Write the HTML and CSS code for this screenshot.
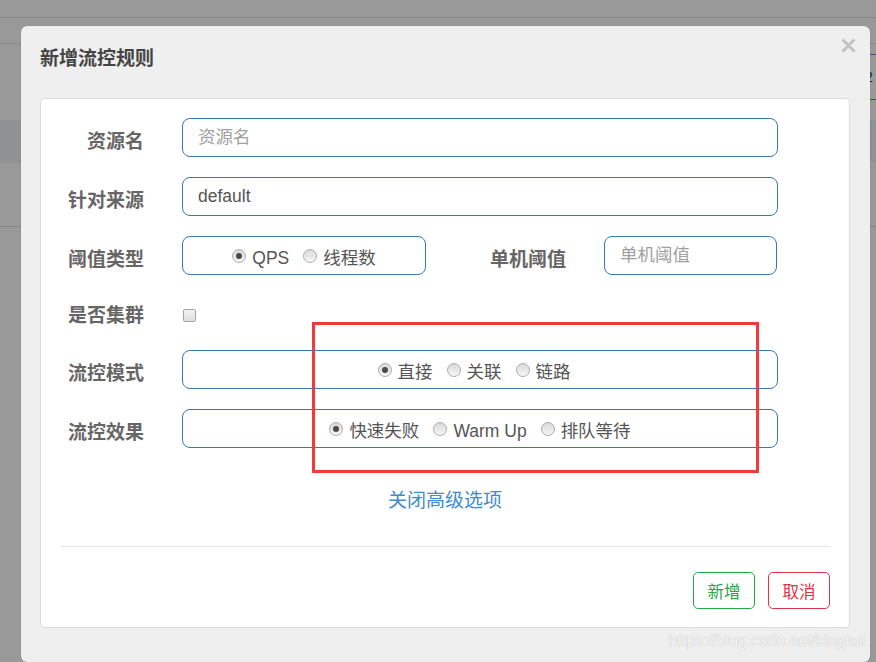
FILE: index.html
```html
<!DOCTYPE html>
<html lang="zh-CN">
<head>
<meta charset="utf-8">
<title>新增流控规则</title>
<link rel="stylesheet" href="styles.css">
</head>
<body>
<div class="page">
  <div class="page-top"></div>
  <div class="page-nav"></div>
  <div class="page-tools"><span class="page-input">2</span></div>
  <div class="page-thead"></div>
  <div class="page-row"></div>
</div>
<div class="overlay"></div>

<div class="modal">
  <svg class="close" width="15" height="15" viewBox="0 0 15 15"><path d="M1.5 1.5 L13.5 13.5 M13.5 1.5 L1.5 13.5" stroke="#c2c2c2" stroke-width="3" stroke-linecap="butt"/></svg>
  <div class="title">新增流控规则</div>
  <div class="panel">
    <div class="row">
      <div class="label">资源名</div>
      <input class="field wide" type="text" placeholder="资源名">
    </div>
    <div class="row">
      <div class="label">针对来源</div>
      <input class="field wide" type="text" value="default">
    </div>
    <div class="row">
      <div class="label">阈值类型</div>
      <div class="field group short">
        <span class="opt"><span class="radio on"></span>QPS</span>
        <span class="opt"><span class="radio"></span>线程数</span>
      </div>
      <div class="label label-inline">单机阈值</div>
      <input class="field small" type="text" placeholder="单机阈值">
    </div>
    <div class="row row-check">
      <div class="label">是否集群</div>
      <span class="checkbox"></span>
    </div>
    <div class="row">
      <div class="label">流控模式</div>
      <div class="field group wide shift">
        <span class="opt"><span class="radio on"></span>直接</span>
        <span class="opt"><span class="radio"></span>关联</span>
        <span class="opt"><span class="radio"></span>链路</span>
      </div>
    </div>
    <div class="row">
      <div class="label">流控效果</div>
      <div class="field group wide">
        <span class="opt"><span class="radio on"></span>快速失败</span>
        <span class="opt"><span class="radio"></span>Warm Up</span>
        <span class="opt"><span class="radio"></span>排队等待</span>
      </div>
    </div>
    <div class="toggle"><a class="link">关闭高级选项</a></div>
    <div class="divider"></div>
    <div class="actions">
      <button class="btn btn-ok">新增</button>
      <button class="btn btn-cancel">取消</button>
    </div>
  </div>
</div>

<div class="annotation"></div>
<div class="watermark">https://blog.csdn.net/kingtok</div>
</body>
</html>
```

FILE: styles.css
```css
* { box-sizing: border-box; }
html, body {
  margin: 0;
  padding: 0;
}
body {
  width: 876px;
  height: 662px;
  overflow: hidden;
  position: relative;
  background: #fff;
  font-family: "Liberation Sans", "Noto Sans CJK SC", sans-serif;
}

/* background page */
.page-top {
  height: 18px;
  border-bottom: 1px solid #e4e4e4;
}
.page-nav {
  height: 26px;
  border-bottom: 1px solid #e2e2e2;
}
.page-tools {
  height: 76px;
  display: flex;
  justify-content: flex-end;
  padding-top: 10px;
}
.page-input {
  width: 14px;
  height: 46px;
  border-top: 1px solid #4a8fd0;
  border-bottom: 1px solid #4a8fd0;
  font-size: 14px;
  line-height: 44px;
  padding-left: 3px;
  color: #333;
}
.page-thead {
  height: 43px;
  background: #eff2f6;
}
.page-row {
  height: 64px;
  border-bottom: 1px solid #e2e2e2;
}
.overlay {
  position: absolute;
  inset: 0;
  background: rgba(0, 0, 0, 0.4);
}

/* modal */
.modal {
  position: absolute;
  left: 21px;
  top: 26px;
  width: 849px;
  height: 636px;
  background: #efefef;
  border-radius: 6px;
  box-shadow: 0 0 1px rgba(0, 0, 0, 0.35);
  padding: 21px 20px 0 19px;
}
.close {
  position: absolute;
  left: 820px;
  top: 12px;
}
.title {
  height: 24px;
  line-height: 24px;
  font-size: 19px;
  font-weight: bold;
  color: #444;
  margin-bottom: 27px;
}
.panel {
  background: #fff;
  border: 1px solid #dcdcdc;
  border-radius: 4px;
  padding: 19px 19px 18px 19px;
}
.row {
  display: flex;
  align-items: flex-start;
  gap: 38px;
  margin-bottom: 20px;
}
.label {
  width: 84px;
  flex: none;
  text-align: right;
  font-size: 19px;
  font-weight: bold;
  color: #666;
  padding-top: 8px;
  line-height: 31px;
}
.label-inline {
  width: auto;
  margin-left: 26px;
}
.field {
  height: 39px;
  border: 1px solid #3578b8;
  border-radius: 8px;
  background: #fff;
  font-family: inherit;
  font-size: 17.5px;
  color: #555;
  padding: 0 15px;
  outline: none;
  flex: none;
}
.field::placeholder { color: #a0a0a0; }
.wide { width: 596px; }
.short { width: 244px; }
.small { width: 173px; }
.group {
  display: flex;
  align-items: center;
  justify-content: center;
  gap: 14px;
  padding-top: 5px;
}
.group.shift { padding-right: 27px; }
.opt {
  display: inline-flex;
  align-items: center;
  gap: 6px;
  line-height: 22px;
}
.radio {
  width: 14px;
  height: 14px;
  border-radius: 50%;
  border: 1px solid #adadad;
  background: linear-gradient(#d9d9d9, #f6f6f6);
  display: inline-flex;
  align-items: center;
  justify-content: center;
  margin-top: -4px;
}
.radio.on::after {
  content: "";
  width: 6px;
  height: 6px;
  border-radius: 50%;
  background: #4a4a4a;
}
.row-check {
  height: 35px;
}
.row-check .label { padding-top: 5px; }
.checkbox {
  width: 13px;
  height: 13px;
  margin-top: 14px;
  margin-left: 1px;
  border: 1px solid #a5a5a5;
  border-radius: 2px;
  background: linear-gradient(#f2f2f2, #dedede);
}
.toggle {
  text-align: center;
  margin-top: 41px;
  height: 24px;
  line-height: 24px;
}
.link {
  font-size: 19px;
  color: #428bca;
  cursor: pointer;
}
.divider {
  margin-top: 33px;
  height: 1px;
  background: #e5e5e5;
}
.actions {
  display: flex;
  justify-content: flex-end;
  gap: 13px;
  margin-top: 25px;
}
.btn {
  width: 62px;
  height: 37px;
  background: #fff;
  border-radius: 5px;
  font-family: inherit;
  font-size: 16.5px;
  padding: 0;
}
.btn-ok {
  border: 1px solid #28a745;
  color: #28a745;
}
.btn-cancel {
  border: 1px solid #dc3545;
  color: #dc3545;
}

/* screenshot annotation */
.annotation {
  position: absolute;
  left: 312px;
  top: 322px;
  width: 447px;
  height: 151px;
  border: 3px solid #f23a3a;
}
.watermark {
  position: absolute;
  right: 9px;
  top: 631px;
  font-size: 16px;
  line-height: 20px;
  color: rgba(255, 255, 255, 0.9);
  text-shadow: 0 0 1px rgba(0, 0, 0, 0.3);
}
```
